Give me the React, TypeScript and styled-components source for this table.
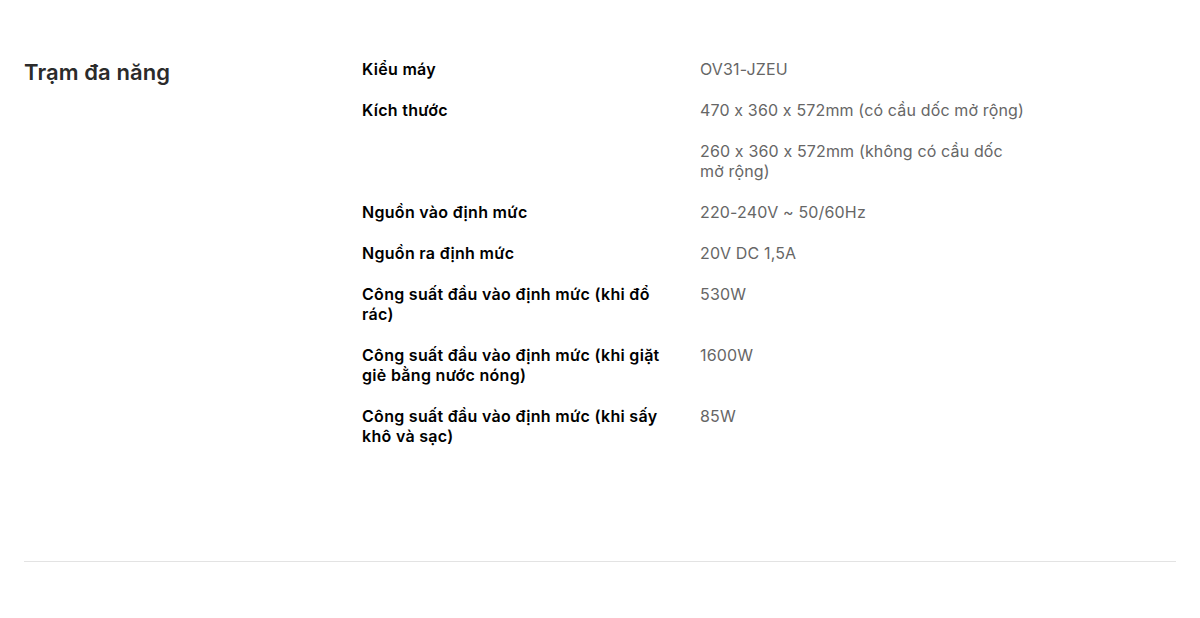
import React from "react";
import styled, { createGlobalStyle } from "styled-components";

const Global = createGlobalStyle`
  html, body { margin: 0; padding: 0; background: #fff; }
  body {
    font-family: Inter, "Noto Sans", sans-serif;
    font-feature-settings: "calt" 0;
    -webkit-font-smoothing: antialiased;
  }
  * { box-sizing: border-box; }
`;

const Page = styled.div`
  padding: 0 24px;
`;

const Section = styled.section`
  display: grid;
  grid-template-columns: 338px 1fr;
  padding: 59px 0 115px;
  border-bottom: 1px solid #e3e3e3;
`;

const Heading = styled.h2`
  margin: 0;
  font-size: 22px;
  line-height: 26px;
  font-weight: 600;
  letter-spacing: 0.1px;
  color: #2b2b2b;
`;

const SpecList = styled.dl`
  margin: 0;
  display: grid;
  grid-template-columns: 338px 328px;
  row-gap: 21px;
`;

const Label = styled.dt`
  margin: 0;
  padding-right: 28px;
  font-size: 16px;
  line-height: 20px;
  font-weight: 600;
  letter-spacing: 0.3px;
  color: #000;
`;

const Values = styled.dd`
  margin: 0;
  display: flex;
  flex-direction: column;
  gap: 21px;
`;

const Value = styled.span`
  font-size: 16px;
  line-height: 20px;
  font-weight: 400;
  letter-spacing: 0.15px;
  color: #666;
`;

const specs: { label: string; values: string[] }[] = [
  { label: "Kiểu máy", values: ["OV31-JZEU"] },
  {
    label: "Kích thước",
    values: [
      "470 x 360 x 572mm (có cầu dốc mở rộng)",
      "260 x 360 x 572mm (không có cầu dốc mở rộng)",
    ],
  },
  { label: "Nguồn vào định mức", values: ["220-240V ~ 50/60Hz"] },
  { label: "Nguồn ra định mức", values: ["20V DC 1,5A"] },
  { label: "Công suất đầu vào định mức (khi đổ rác)", values: ["530W"] },
  {
    label: "Công suất đầu vào định mức (khi giặt giẻ bằng nước nóng)",
    values: ["1600W"],
  },
  {
    label: "Công suất đầu vào định mức (khi sấy khô và sạc)",
    values: ["85W"],
  },
];

export default function App() {
  return (
    <Page>
      <Global />
      <Section>
        <Heading>Trạm đa năng</Heading>
        <SpecList>
          {specs.map((s) => (
            <React.Fragment key={s.label}>
              <Label>{s.label}</Label>
              <Values>
                {s.values.map((v) => (
                  <Value key={v}>{v}</Value>
                ))}
              </Values>
            </React.Fragment>
          ))}
        </SpecList>
      </Section>
    </Page>
  );
}
